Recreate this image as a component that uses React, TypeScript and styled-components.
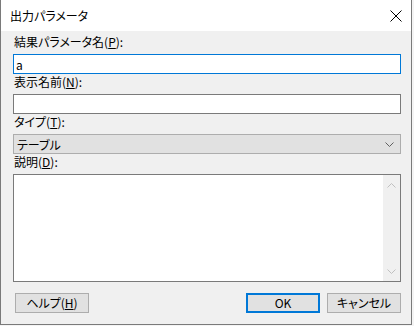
import styled, { createGlobalStyle } from "styled-components";

const GlobalStyle = createGlobalStyle`
  html, body {
    margin: 0;
    padding: 0;
    background: #f4f4f4;
  }
  body {
    font-family: "Noto Sans CJK JP", "Noto Sans", sans-serif;
    font-size: 12px;
    color: #000;
    font-feature-settings: "palt";
  }
`;

const Window = styled.div`
  width: 412px;
  height: 325px;
  box-sizing: border-box;
  display: flex;
  flex-direction: column;
  background: #f0f0f0;
  border: 1px solid #7a7a7a;
  border-top: none;
`;

const TitleBar = styled.div`
  height: 31px;
  flex: none;
  display: flex;
  align-items: center;
  justify-content: space-between;
  background: #fff;
  padding: 0 8px 0 9px;
`;

const Title = styled.span`
  font-size: 12px;
  line-height: 16px;
`;

const CloseButton = styled.div`
  width: 12px;
  height: 12px;
  display: flex;
  margin-right: 1px;
`;

const Body = styled.div`
  flex: 1;
  display: flex;
  flex-direction: column;
  padding: 3px 10px 0 12px;
`;

const Field = styled.div`
  display: flex;
  flex-direction: column;
`;

const Label = styled.label`
  line-height: 16px;
  height: 16px;
  margin-bottom: 4px;
  padding-left: 1px;

  u {
    text-decoration: underline;
    text-underline-offset: 1px;
  }
`;

const TextInput = styled.input<{ $focused?: boolean }>`
  height: 20px;
  box-sizing: border-box;
  margin: 0;
  padding: 0 2px;
  border: 1px solid ${(p) => (p.$focused ? "#0078d7" : "#7a7a7a")};
  background: #fff;
  font: inherit;
  font-size: 12px;
  outline: none;
`;

const Combo = styled.div`
  height: 20px;
  box-sizing: border-box;
  display: flex;
  align-items: center;
  justify-content: space-between;
  border: 1px solid #adadad;
  background: #e1e1e1;
  padding: 0 6px 0 3px;
`;

const Memo = styled.div`
  height: 108px;
  box-sizing: border-box;
  display: flex;
  border: 1px solid #7a7a7a;
  background: #fff;
`;

const MemoText = styled.textarea`
  flex: 1;
  border: none;
  resize: none;
  outline: none;
  font: inherit;
  padding: 1px 3px;
  margin: 0;
`;

const ScrollTrack = styled.div`
  width: 17px;
  display: flex;
  flex-direction: column;
  justify-content: space-between;
  align-items: center;
  background: #f0f0f0;
  padding: 8px 0 7px;
  box-sizing: border-box;
`;

const Footer = styled.div`
  display: flex;
  align-items: center;
  margin-top: 11px;
  padding-left: 2px;
  gap: 7px;
`;

const Spacer = styled.div`
  flex: 1;
`;

const Button = styled.button<{ $default?: boolean }>`
  width: 74px;
  height: 20px;
  box-sizing: border-box;
  margin: 0;
  padding: 0;
  font: inherit;
  font-size: 12px;
  color: #000;
  background: #e1e1e1;
  border: ${(p) => (p.$default ? "2px solid #0078d7" : "1px solid #adadad")};
  border-radius: 0;
  line-height: 16px;

  u {
    text-decoration: underline;
    text-underline-offset: 1px;
  }
`;

function Chevron({ up, color }: { up?: boolean; color: string }) {
  return (
    <svg width="9" height="5" viewBox="0 0 9 5">
      <path
        d={up ? "M0.5 4.5 L4.5 0.5 L8.5 4.5" : "M0.5 0.5 L4.5 4.5 L8.5 0.5"}
        fill="none"
        stroke={color}
        strokeWidth="1"
      />
    </svg>
  );
}

export default function App() {
  return (
    <>
      <GlobalStyle />
      <Window>
        <TitleBar>
          <Title>出力パラメータ</Title>
          <CloseButton>
            <svg width="12" height="12" viewBox="0 0 12 12">
              <path d="M0.5 0.5 L11.5 11.5 M11.5 0.5 L0.5 11.5" stroke="#000" strokeWidth="1" />
            </svg>
          </CloseButton>
        </TitleBar>
        <Body>
          <Field>
            <Label>
              結果パラメータ名(<u>P</u>):
            </Label>
            <TextInput $focused defaultValue="a" />
          </Field>
          <Field>
            <Label>
              表示名前(<u>N</u>):
            </Label>
            <TextInput />
          </Field>
          <Field>
            <Label>
              タイプ(<u>T</u>):
            </Label>
            <Combo>
              <span>テーブル</span>
              <Chevron color="#606060" />
            </Combo>
          </Field>
          <Field>
            <Label>
              説明(<u>D</u>):
            </Label>
            <Memo>
              <MemoText />
              <ScrollTrack>
                <Chevron up color="#c0c0c0" />
                <Chevron color="#c0c0c0" />
              </ScrollTrack>
            </Memo>
          </Field>
          <Footer>
            <Button>
              ヘルプ(<u>H</u>)
            </Button>
            <Spacer />
            <Button $default>OK</Button>
            <Button>キャンセル</Button>
          </Footer>
        </Body>
      </Window>
    </>
  );
}
